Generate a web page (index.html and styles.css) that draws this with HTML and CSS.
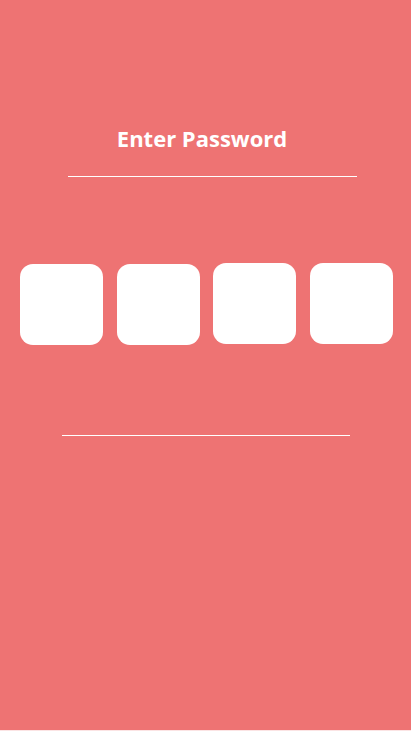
FILE: index.html
```html
<!DOCTYPE html>
<html lang="en">
<head>
<meta charset="utf-8">
<title>Enter Password</title>
<link rel="stylesheet" href="styles.css">
</head>
<body>
<main class="screen">
  <h1 class="title">Enter Password</h1>
  <hr class="rule rule-top">
  <div class="pins">
    <div class="pin"></div>
    <div class="pin"></div>
    <div class="pin pin-up"></div>
    <div class="pin pin-up"></div>
  </div>
  <hr class="rule rule-bottom">
</main>
</body>
</html>
```
FILE: styles.css
```css
html, body {
  margin: 0;
  padding: 0;
  background: #fbe4e4;
}
.screen {
  height: 730px;
  background: #ee7373;
  display: flex;
  flex-direction: column;
  align-items: flex-start;
  font-family: "Open Sans", "Noto Sans", sans-serif;
}
.title {
  margin: 123px 0 0 0;
  width: 404px;
  text-align: center;
  font-size: 22px;
  line-height: 30px;
  font-weight: 700;
  color: #ffffff;
}
.rule {
  border: none;
  height: 1px;
  background: #ffffff;
  margin: 0;
}
.rule-top {
  margin: 23px 0 0 68px;
  width: 289px;
}
.pins {
  margin-top: 87px;
  padding-left: 20px;
  display: flex;
  gap: 13.67px;
  align-items: flex-start;
}
.pin {
  width: 83px;
  height: 81px;
  background: #ffffff;
  border-radius: 13px;
}
.pin-up {
  margin-top: -1px;
}
.rule-bottom {
  margin: 90px 0 0 62px;
  width: 288px;
}
```
